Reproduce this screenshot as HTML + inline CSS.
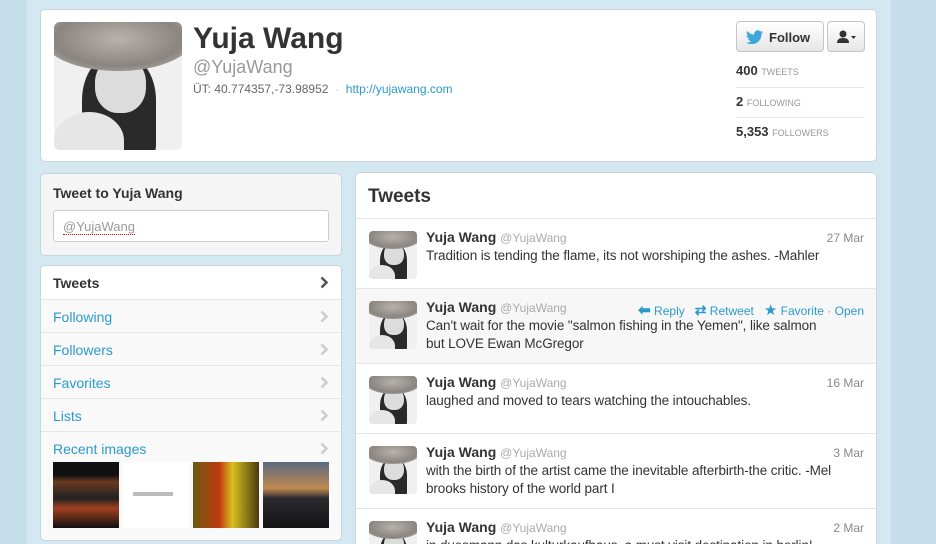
<!DOCTYPE html>
<html><head><style>
*{margin:0;padding:0;box-sizing:border-box}
html,body{width:936px;height:544px;overflow:hidden}
body{background:#c4dfeb;font-family:"Liberation Sans",Arial,sans-serif;position:relative;color:#333}
.col{position:absolute;left:27px;top:0;width:864px;height:544px;background:#d3e8f1}
.card{position:absolute;background:#fff;border:1px solid #c9d5dc;border-radius:5px}
.pic{position:absolute;overflow:hidden;background:#f0f0f0}
.pic .hat{position:absolute;left:-8%;top:-12%;width:116%;height:50%;border-radius:50%;background:radial-gradient(ellipse,#b8b2ad,#8a8580 60%,#c8c8c8)}
.pic .hair{position:absolute;left:22%;top:25%;width:58%;height:80%;border-radius:45% 45% 10% 10%;background:#2a2a2a}
.pic .face{position:absolute;left:32%;top:27%;width:40%;height:44%;border-radius:45%;background:#dcdcdc}
.pic .sh{position:absolute;left:0%;top:70%;width:55%;height:45%;border-radius:50% 50% 0 0;background:#e6e6e6}
a{color:#2b9acd;text-decoration:none}
.stat{position:absolute;left:695px;font-size:13px;font-weight:bold;color:#333}
.stat span{font-size:9px;font-weight:normal;color:#999}
.nav{position:absolute;left:0;width:300px;height:33px;border-top:1px solid #e6e6e6;font-size:14px;padding:9px 12px;color:#2b9acd}
.nav svg{position:absolute;right:12px;top:10px}
.tw{position:absolute;left:0;width:520px;border-top:1px solid #e6e6e6}
.tw .n{position:absolute;left:70px;top:10px;font-size:14px;font-weight:bold;color:#333}
.tw .n span{font-size:12px;font-weight:normal;color:#aaa}
.tw .d{position:absolute;right:12px;top:12px;font-size:12px;color:#888}
.tw .t{position:absolute;left:70px;top:28px;font-size:13.5px;line-height:18px;color:#333;width:440px;letter-spacing:-0.1px}
</style></head><body>
<div class="col"></div>
<div class="card" style="left:40px;top:9px;width:837px;height:153px">
 <div class="pic" style="left:13px;top:12px;width:128px;height:128px;border-radius:6px"><div class="hair"></div><div class="face"></div><div class="hat"></div><div class="sh"></div></div>
 <div style="position:absolute;left:152px;top:12px;font-size:30px;font-weight:bold;color:#333">Yuja Wang</div>
 <div style="position:absolute;left:152px;top:47px;font-size:18px;color:#999">@YujaWang</div>
 <div style="position:absolute;left:152px;top:72px;font-size:12px;color:#666">ÜT: 40.774357,-73.98952 <span style="color:#ccc">&nbsp;·&nbsp;</span> <a>http://yujawang.com</a></div>
 <div style="position:absolute;left:695px;top:11px;width:88px;height:31px;border:1px solid #c5c5c5;border-radius:4px;background:linear-gradient(#fff,#e6e6e6);font-size:13px;font-weight:bold;padding:8px 0 0 32px;color:#333">Follow
  <svg style="position:absolute;left:9px;top:8px" width="18" height="14" viewBox="0 0 18 14"><path d="M17 2c-.6.3-1.3.5-2 .5.7-.4 1.2-1 1.5-1.8-.7.4-1.4.7-2.2.8A3.5 3.5 0 0 0 8.3 4.6 10 10 0 0 1 1.2 1a3.5 3.5 0 0 0 1 4.7c-.5 0-1-.2-1.5-.4 0 1.7 1.2 3.1 2.8 3.4-.5.1-1 .2-1.5.1.4 1.4 1.7 2.4 3.3 2.4A7 7 0 0 1 0 12.6 10 10 0 0 0 15.5 4c.6-.5 1.1-1.1 1.5-2z" fill="#3ea7dc"/></svg></div>
 <div style="position:absolute;left:786px;top:11px;width:38px;height:31px;border:1px solid #c5c5c5;border-radius:4px;background:linear-gradient(#fff,#e6e6e6)">
  <svg style="position:absolute;left:8px;top:8px" width="22" height="14" viewBox="0 0 22 14"><circle cx="7" cy="4" r="3.5" fill="#333"/><path d="M1 13c0-3.5 2-5 6-5s6 1.5 6 5z" fill="#333"/><path d="M15 6h5l-2.5 3z" fill="#333"/></svg></div>
 <div class="stat" style="top:53px">400 <span>TWEETS</span></div>
 <div style="position:absolute;left:695px;top:77px;width:128px;border-top:1px solid #e6e6e6"></div>
 <div class="stat" style="top:84px">2 <span>FOLLOWING</span></div>
 <div style="position:absolute;left:695px;top:107px;width:128px;border-top:1px solid #e6e6e6"></div>
 <div class="stat" style="top:114px">5,353 <span>FOLLOWERS</span></div>
</div>
<div class="card" style="left:40px;top:173px;width:302px;height:83px;background:#f5f5f5">
 <div style="position:absolute;left:12px;top:11px;font-size:14px;font-weight:bold">Tweet to Yuja Wang</div>
 <div style="position:absolute;left:12px;top:36px;width:276px;height:32px;background:#fff;border:1px solid #ccc;border-radius:3px;font-size:13px;color:#999;padding:8px 9px"><span style="border-bottom:1px dotted #d00">@YujaWang</span></div>
</div>
<div class="card" style="left:40px;top:265px;width:302px;height:276px;background:#f9f9f9;overflow:hidden">
 <div class="nav" style="top:0;border:none;color:#333;font-weight:bold;background:#fff">Tweets<svg width="9" height="13" viewBox="0 0 9 13"><path d="M1.5 1.5l5 5-5 5" stroke="#555" stroke-width="2.6" fill="none"/></svg></div>
 <div class="nav" style="top:33px">Following<svg width="9" height="13" viewBox="0 0 9 13"><path d="M1.5 1.5l5 5-5 5" stroke="#ccc" stroke-width="2.6" fill="none"/></svg></div>
 <div class="nav" style="top:66px">Followers<svg width="9" height="13" viewBox="0 0 9 13"><path d="M1.5 1.5l5 5-5 5" stroke="#ccc" stroke-width="2.6" fill="none"/></svg></div>
 <div class="nav" style="top:99px">Favorites<svg width="9" height="13" viewBox="0 0 9 13"><path d="M1.5 1.5l5 5-5 5" stroke="#ccc" stroke-width="2.6" fill="none"/></svg></div>
 <div class="nav" style="top:132px">Lists<svg width="9" height="13" viewBox="0 0 9 13"><path d="M1.5 1.5l5 5-5 5" stroke="#ccc" stroke-width="2.6" fill="none"/></svg></div>
 <div class="nav" style="top:165px">Recent images<svg width="9" height="13" viewBox="0 0 9 13"><path d="M1.5 1.5l5 5-5 5" stroke="#ccc" stroke-width="2.6" fill="none"/></svg></div>
 <div style="position:absolute;left:12px;top:196px;width:66px;height:66px;background:linear-gradient(#111 20%,#6a3a20 30%,#222 55%,#a04020 70%,#111)"></div>
 <div style="position:absolute;left:82px;top:196px;width:66px;height:66px;background:#fff"><div style="position:absolute;left:10px;top:30px;width:40px;height:4px;background:#bbb"></div></div>
 <div style="position:absolute;left:152px;top:196px;width:66px;height:66px;background:linear-gradient(90deg,#6a5a10,#c03a10 40%,#d9c020 60%,#4a3a10)"></div>
 <div style="position:absolute;left:222px;top:196px;width:66px;height:66px;background:linear-gradient(#5a6a80,#c08a50 40%,#2a2a30 55%,#151515)"></div>
</div>
<div class="card" style="left:355px;top:172px;width:522px;height:380px;overflow:hidden">
 <div style="position:absolute;left:12px;top:13px;font-size:19px;font-weight:bold">Tweets</div>
 <div class="tw" style="top:45px;height:70px"><div class="pic" style="left:13px;top:12px;width:48px;height:48px;border-radius:4px"><div class="hair"></div><div class="face"></div><div class="hat"></div><div class="sh"></div></div><div class="n">Yuja Wang <span>@YujaWang</span></div><div class="d">27 Mar</div><div class="t">Tradition is tending the flame, its not worshiping the ashes. -Mahler</div></div>
 <div class="tw" style="top:115px;height:75px;background:#f7f7f7"><div class="pic" style="left:13px;top:12px;width:48px;height:48px;border-radius:4px"><div class="hair"></div><div class="face"></div><div class="hat"></div><div class="sh"></div></div><div class="n">Yuja Wang <span>@YujaWang</span></div><div class="d" style="color:#2b9acd"><b style="font-size:15px">⬅</b> Reply &nbsp; <b style="font-size:14px">⇄</b> Retweet &nbsp; <span style="font-size:15px">★</span> Favorite <span style="color:#999">·</span> Open</div><div class="t">Can't wait for the movie "salmon fishing in the Yemen", like salmon<br>but LOVE Ewan McGregor</div></div>
 <div class="tw" style="top:190px;height:70px"><div class="pic" style="left:13px;top:12px;width:48px;height:48px;border-radius:4px"><div class="hair"></div><div class="face"></div><div class="hat"></div><div class="sh"></div></div><div class="n">Yuja Wang <span>@YujaWang</span></div><div class="d">16 Mar</div><div class="t">laughed and moved to tears watching the intouchables.</div></div>
 <div class="tw" style="top:260px;height:75px"><div class="pic" style="left:13px;top:12px;width:48px;height:48px;border-radius:4px"><div class="hair"></div><div class="face"></div><div class="hat"></div><div class="sh"></div></div><div class="n">Yuja Wang <span>@YujaWang</span></div><div class="d">3 Mar</div><div class="t">with the birth of the artist came the inevitable afterbirth-the critic. -Mel<br>brooks history of the world part I</div></div>
 <div class="tw" style="top:335px;height:70px"><div class="pic" style="left:13px;top:12px;width:48px;height:48px;border-radius:4px"><div class="hair"></div><div class="face"></div><div class="hat"></div><div class="sh"></div></div><div class="n">Yuja Wang <span>@YujaWang</span></div><div class="d">2 Mar</div><div class="t">in duesmann das kulturkaufhaus, a must visit destination in berlin!</div></div>
</div>
</body></html>
